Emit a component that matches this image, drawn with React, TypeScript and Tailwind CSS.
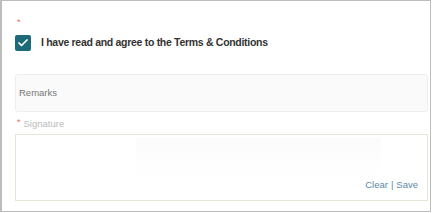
import { Check } from 'lucide-react';

function App() {
  return (
    <div className="w-[432px] h-[213px] bg-white" style={{ fontFamily: '"Liberation Sans", Arial, sans-serif' }}>
      <div className="w-[431px] h-[212px] border border-l-2 border-[#bdbdbd] pl-[13px] pr-[2px] pt-[17px]">
        <div className="text-[#f26b5b] text-[9px] leading-[9px] pl-[2px]">*</div>
        <label className="flex items-center gap-[10px] mt-[8px] h-[16px]">
          <span className="w-[16px] h-[16px] rounded-[2px] bg-[#1d6b78] flex items-center justify-center">
            <Check size={12} strokeWidth={3.5} className="text-white" />
          </span>
          <span className="text-[10.5px] tracking-[-0.3px] font-bold text-[#333]">I have read and agree to the Terms &amp; Conditions</span>
        </label>
        <div className="mt-[23px] h-[38px] rounded-[3px] border border-[#eeeeee] bg-[#fafafa] flex items-center px-[3px]">
          <span className="text-[9.5px] text-[#777]">Remarks</span>
        </div>
        <div className="mt-[6px] flex items-start gap-[3px] h-[16px]">
          <span className="text-[#f26b5b] text-[9px] leading-[9px] pl-[2px]">*</span>
          <span className="text-[9.5px] text-[#bbbbbb] leading-[12px]">Signature</span>
        </div>
        <div className="h-[67px] border border-[#e6e6d6] flex flex-col justify-between p-[3px]">
          <div className="ml-[117px] w-[245px] h-[40px] bg-gradient-to-b from-[#fbfbfb] to-white" />
          <div className="flex justify-end pr-[6px] pb-[5px] text-[9.5px] text-[#5a88a8]">
            <span>Clear</span>
            <span className="mx-[3px]">|</span>
            <span>Save</span>
          </div>
        </div>
      </div>
    </div>
  );
}

export default App;
